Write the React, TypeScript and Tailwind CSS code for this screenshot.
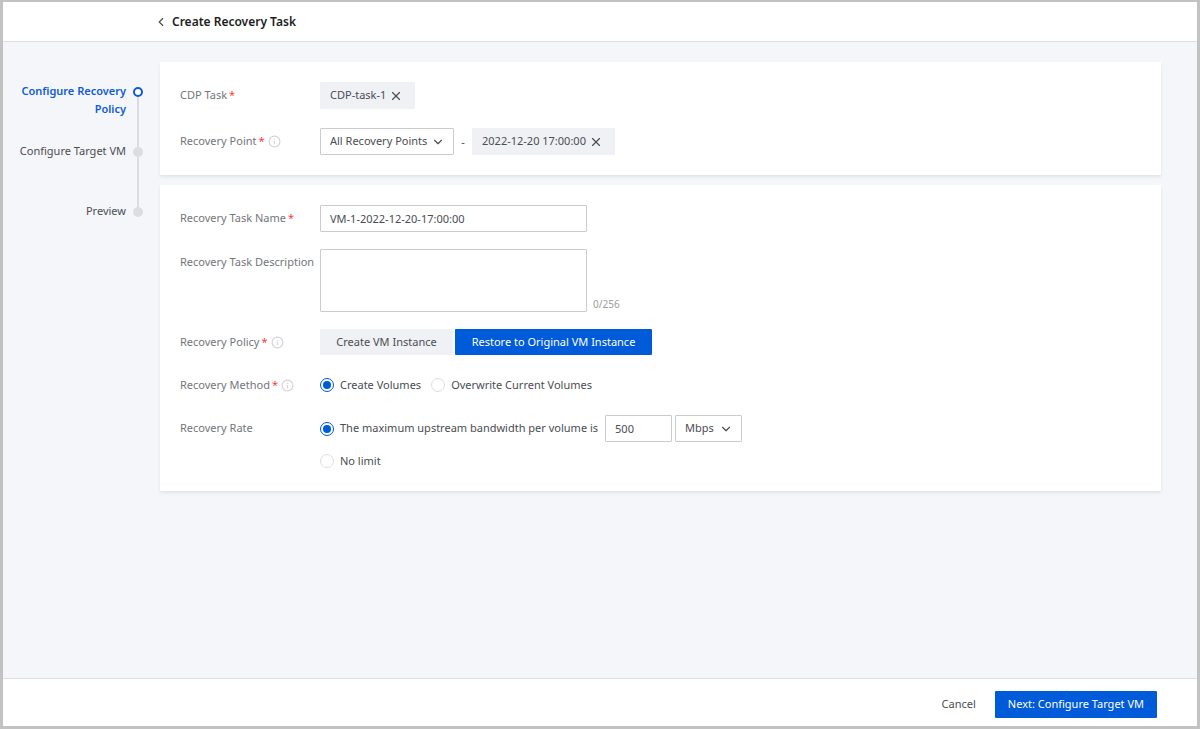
import { useState } from "react";
import type { ReactNode } from "react";
import { ChevronDown, ChevronLeft, Info, X } from "lucide-react";

const steps = ["Configure Recovery Policy", "Configure Target VM", "Preview"];

const radioClass =
  "m-0 grid size-3.5 shrink-0 appearance-none place-content-center rounded-full border border-[#dcdee2] bg-white checked:border-[#005bd9] checked:before:size-2 checked:before:rounded-full checked:before:bg-[#005bd9]";

const fieldClass =
  "rounded-[1px] border border-[#c9cbce] bg-white text-[11px] text-[#4a4d52] outline-none";

interface RowProps {
  label: string;
  htmlFor?: string;
  required?: boolean;
  info?: boolean;
  children: ReactNode;
}

// One line of the form: label on the left, control on the right
function Row({ label, htmlFor, required, info, children }: RowProps) {
  return (
    <div className="flex items-start">
      <div className="flex h-[26px] w-[140px] shrink-0 items-center pt-px whitespace-nowrap text-[#73767b]">
        <label htmlFor={htmlFor}>{label}</label>
        {required && <span className="ml-0.5 text-[#ff3b3b]">*</span>}
        {info && <Info className="ml-[3px] size-[13px] text-[#cfd1d6]" strokeWidth={2} aria-hidden />}
      </div>
      {children}
    </div>
  );
}

function Tag({ text, onClose }: { text: string; onClose?: () => void }) {
  return (
    <span className="flex h-[27px] items-center rounded-[1px] bg-[#f0f1f5] pr-3 pl-2.5">
      {text}
      <button type="button" aria-label={`Remove ${text}`} onClick={onClose} className="ml-[3px]">
        <X className="size-3.5" strokeWidth={2} />
      </button>
    </span>
  );
}

function Select({ label, options, id, className }: { label: string; options: string[]; id?: string; className: string }) {
  return (
    <div className={`relative ${className}`}>
      <select id={id} aria-label={label} className={`${fieldClass} h-[27px] w-full appearance-none pr-6 pl-[9px]`}>
        {options.map((o) => (
          <option key={o}>{o}</option>
        ))}
      </select>
      <ChevronDown className="pointer-events-none absolute top-[7px] right-[9px] size-3.5 text-[#4a4d52]" strokeWidth={2} />
    </div>
  );
}

export default function App() {
  const [name, setName] = useState("VM-1-2022-12-20-17:00:00");
  const [description, setDescription] = useState("");
  const [policy, setPolicy] = useState("restore");
  const [rate, setRate] = useState("500");

  return (
    <div className="flex min-h-screen flex-col border-3 border-t-2 border-[#c2c2c2] bg-[#f5f6fa] font-['Noto_Sans','Open_Sans',sans-serif] text-[11px] text-[#4a4d52]">
      <header className="flex h-10 items-center border-b border-[#dcdee2] bg-white pl-[151px]">
        <button type="button" aria-label="Back" className="mr-1">
          <ChevronLeft className="size-3.5" strokeWidth={2} />
        </button>
        <h1 className="text-xs font-semibold text-[#1b1d21]">Create Recovery Task</h1>
      </header>

      <main className="flex flex-1 pt-5 pr-9">
        <ol className="w-[157px] shrink-0 pt-[25px] pr-[17px]">
          {steps.map((step, i) => (
            <li key={step} className="flex h-[60px] justify-end gap-[7px]">
              <span
                className={
                  i === 0
                    ? "-mt-[5px] w-[112px] text-right leading-[18px] font-semibold text-[#0f5bd5]"
                    : "-mt-[5px] text-right leading-[18px] whitespace-nowrap"
                }
              >
                {step}
              </span>
              <span className="flex w-2.5 flex-col items-center">
                <span
                  className={
                    i === 0
                      ? "size-2.5 shrink-0 rounded-full border-2 border-[#0f5bd5] bg-white"
                      : "size-2.5 shrink-0 rounded-full bg-[#dcdde0]"
                  }
                />
                {i < steps.length - 1 && <span className="w-0.5 flex-1 bg-[#dcdde0]" />}
              </span>
            </li>
          ))}
        </ol>

        <div className="flex min-w-0 flex-1 flex-col gap-2.5">
          <section className="flex flex-col gap-[19px] bg-white p-5 shadow-[0_2px_3px_rgba(0,0,0,0.08)]">
            <Row label="CDP Task" required>
              <Tag text="CDP-task-1" />
            </Row>
            <Row label="Recovery Point" htmlFor="point" required info>
              <Select id="point" label="Recovery Point" options={["All Recovery Points"]} className="w-[134px]" />
              <span className="w-[18px] text-center leading-[27px]">-</span>
              <Tag text="2022-12-20 17:00:00" />
            </Row>
          </section>

          <section className="flex flex-col gap-[17px] bg-white px-5 pt-5 pb-[17px] shadow-[0_2px_3px_rgba(0,0,0,0.08)]">
            <Row label="Recovery Task Name" htmlFor="name" required>
              <input
                id="name"
                value={name}
                onChange={(e) => setName(e.target.value)}
                className={`${fieldClass} h-[27px] w-[267px] px-[9px]`}
              />
            </Row>
            <Row label="Recovery Task Description" htmlFor="description">
              <textarea
                id="description"
                maxLength={256}
                value={description}
                onChange={(e) => setDescription(e.target.value)}
                className={`${fieldClass} h-[63px] w-[267px] resize-none px-[9px] py-1`}
              />
              <span className="ml-1.5 self-end text-[10px] leading-4 text-[#9a9da3]">{description.length}/256</span>
            </Row>
            <Row label="Recovery Policy" required info>
              <div className="flex gap-0.5">
                <button
                  type="button"
                  onClick={() => setPolicy("create")}
                  className={
                    policy === "create"
                      ? "h-[26px] w-[133px] rounded-[1px] bg-[#005bd9] text-white"
                      : "h-[26px] w-[133px] rounded-[1px] bg-[#f0f1f5]"
                  }
                >
                  Create VM Instance
                </button>
                <button
                  type="button"
                  onClick={() => setPolicy("restore")}
                  className={
                    policy === "restore"
                      ? "h-[26px] w-[197px] rounded-[1px] bg-[#005bd9] text-white"
                      : "h-[26px] w-[197px] rounded-[1px] bg-[#f0f1f5]"
                  }
                >
                  Restore to Original VM Instance
                </button>
              </div>
            </Row>
            <Row label="Recovery Method" required info>
              <div className="flex h-[26px] items-center gap-2.5">
                <label className="flex items-center gap-1.5">
                  <input type="radio" name="method" defaultChecked className={radioClass} />
                  Create Volumes
                </label>
                <label className="flex items-center gap-1.5">
                  <input type="radio" name="method" className={radioClass} />
                  Overwrite Current Volumes
                </label>
              </div>
            </Row>
            <Row label="Recovery Rate">
              <div className="flex flex-col gap-1.5">
                <div className="flex items-center">
                  <label className="flex items-center gap-1.5">
                    <input type="radio" name="rate" defaultChecked className={radioClass} />
                    The maximum upstream bandwidth per volume is
                  </label>
                  <input
                    aria-label="Bandwidth"
                    value={rate}
                    onChange={(e) => setRate(e.target.value)}
                    className={`${fieldClass} ml-[7px] h-[27px] w-[67px] px-[9px]`}
                  />
                  <Select label="Bandwidth unit" options={["Mbps", "Gbps"]} className="ml-[3px] w-[67px]" />
                </div>
                <label className="flex h-[26px] items-center gap-1.5">
                  <input type="radio" name="rate" className={radioClass} />
                  No limit
                </label>
              </div>
            </Row>
          </section>
        </div>
      </main>

      <footer className="flex h-12 items-start justify-end gap-[19px] border-t border-[#dcdee2] bg-white pt-3 pr-10">
        <button type="button" className="h-[27px]">
          Cancel
        </button>
        <button type="button" className="h-[27px] rounded-[1px] bg-[#005bd9] px-[13px] text-white">
          Next: Configure Target VM
        </button>
      </footer>
    </div>
  );
}
